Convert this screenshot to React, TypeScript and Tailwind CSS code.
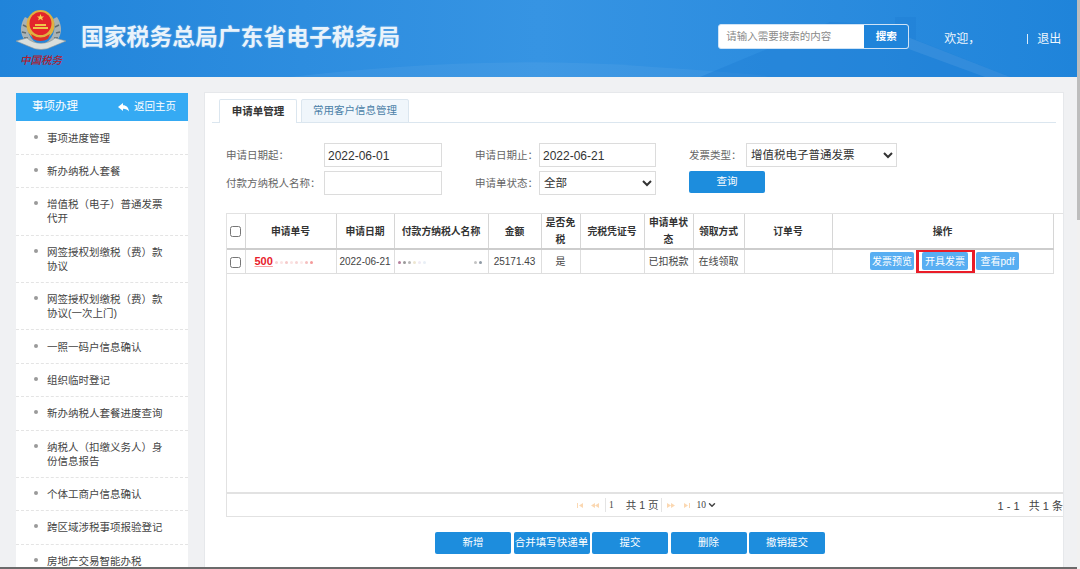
import { ChevronDown } from "lucide-react";

const menuItems = [
  "事项进度管理",
  "新办纳税人套餐",
  "增值税（电子）普通发票代开",
  "网签授权划缴税（费）款协议",
  "网签授权划缴税（费）款协议(一次上门)",
  "一照一码户信息确认",
  "组织临时登记",
  "新办纳税人套餐进度查询",
  "纳税人（扣缴义务人）身份信息报告",
  "个体工商户信息确认",
  "跨区域涉税事项报验登记",
  "房地产交易智能办税",
];

const actions = ["新增", "合并填写快递单", "提交", "删除", "撤销提交"];

function Logo() {
  return (
    <div className="flex w-[50px] flex-col items-center">
      <svg width="50" height="49" viewBox="0 0 50 49">
        <path d="M9 12 C1 24 5 38 21 43 L25 40 C13 36 9 24 13 14 Z" fill="#a9b2b4" />
        <path d="M41 12 C49 24 45 38 29 43 L25 40 C37 36 41 24 37 14 Z" fill="#a9b2b4" />
        <path d="M7 20 l4 2 M6 27 l4 1 M8 33 l4 0 M43 20 l-4 2 M44 27 l-4 1 M42 33 l-4 0" stroke="#5f6b6e" strokeWidth="1.5" />
        <path d="M0 36 L11 33 C18 40 32 40 39 33 L50 36 L38 41 Q25 48 12 41 Z" fill="#d9dedc" stroke="#8d9799" strokeWidth="0.6" />
        <ellipse cx="24.5" cy="20" rx="14" ry="15" fill="#e0b040" />
        <ellipse cx="24.5" cy="18.5" rx="11" ry="11.5" fill="#e3242b" />
        <path d="M24.5 9 l1 2.4 2.6 0 -2 1.6 .8 2.5 -2.4 -1.5 -2.4 1.5 .8 -2.5 -2 -1.6 2.6 0 Z" fill="#f6d14e" />
        <path d="M17 22 h15 v2 h-15 Z M19 19 h11 v2 h-11 Z" fill="#f0c44a" />
        <path d="M15 29 Q24.5 36 34 29 L32 34 Q24.5 38 17 34 Z" fill="#d9302a" />
      </svg>
      <span className="text-[10.5px] leading-[13px] font-medium italic text-[#ad2030] whitespace-nowrap">中国税务</span>
    </div>
  );
}

function Header() {
  return (
    <header className="relative flex h-[77px] shrink-0 items-center overflow-hidden bg-gradient-to-r from-[#2084da] via-[#3694e3] to-[#1f84da]">
      <svg className="absolute inset-0" width="1077" height="77" viewBox="0 0 1077 77">
        <path d="M290 77 Q480 55 640 66 T760 77 Z" fill="#ffffff" fillOpacity="0.05" />
        <path d="M700 77 L760 52 L830 22 L870 24 L895 38 L895 17 L916 17 L916 40 L1010 77 Z" fill="#1f7fd4" fillOpacity="0.45" />
        <path d="M905 36 L1010 77 L985 77 L895 44 Z" fill="#ffffff" fillOpacity="0.08" />
      </svg>
      <div className="relative ml-[16px] mb-[5px] flex items-start">
        <Logo />
      </div>
      <h1 className="relative ml-[15px] mb-[3px] text-[22.8px] leading-[28px] font-bold text-[#e9f3fb] whitespace-nowrap [text-shadow:0_0_2px_rgba(255,255,255,0.35)]">
        国家税务总局广东省电子税务局
      </h1>
      <div className="relative ml-[318px] mb-[4px] flex h-[25px] w-[191px] overflow-hidden rounded-[3px] border border-[#cfe3f6] bg-white">
        <div className="flex flex-1 items-center pl-[7px] text-[10.5px] text-[#8a8a8a]">请输入需要搜索的内容</div>
        <div className="flex w-[44px] items-center justify-center bg-[#1f84da] text-[10.5px] font-bold text-white">搜索</div>
      </div>
      <div className="relative ml-[35px] text-[12px] text-[#eef6fd]">欢迎，</div>
      <div className="relative ml-[47px] h-[10px] w-px bg-[#dcecf9]" />
      <div className="relative ml-[9px] text-[12px] text-[#eef6fd]">退出</div>
    </header>
  );
}

function Sidebar() {
  return (
    <aside className="ml-[16px] w-[172px] shrink-0 self-start bg-white">
      <div className="mb-[0.5px] flex h-[28px] items-center justify-between bg-[#35aaf3] pl-[16px] pr-[12px] text-white">
        <span className="text-[11.5px]">事项办理</span>
        <span className="flex items-center text-[10.5px]">
          <svg width="11" height="9" viewBox="0 0 11 9" className="mr-[5px]">
            <path d="M0 4 L5 0 V2.3 C8.5 2.3 10.5 4.5 11 8.5 C9.5 6.5 8 5.7 5 5.7 V8 Z" fill="#ffffff" />
          </svg>
          返回主页
        </span>
      </div>
      {menuItems.map((item) => (
        <div key={item} className="flex items-start border-b border-dashed border-[#e4e4e4] py-[9.2px] pl-[18px] last:border-b-0">
          <span className="mt-[4px] h-[4px] w-[4px] shrink-0 rounded-full bg-[#9a9a9a]" />
          <span className="ml-[9px] w-[118px] text-[10.5px] leading-[14px] text-[#444]">{item}</span>
        </div>
      ))}
    </aside>
  );
}

function Dots({ colors }: { colors: string[] }) {
  return (
    <span className="inline-flex items-center gap-[2px] align-middle">
      {colors.map((color, i) => (
        <span key={i} className="h-[3px] w-[3px] rounded-full" style={{ backgroundColor: color }} />
      ))}
    </span>
  );
}

function SearchForm() {
  const labelClass = "pt-[1px] text-[10.5px] text-[#666] whitespace-nowrap";
  const fieldClass = "h-[24px] w-full border border-[#dcdcdc] bg-white text-[11.5px] text-[#333] outline-none";
  return (
    <div className="ml-[21px] mt-[20px] grid grid-cols-[98px_118px_33px_64px_117px_33px_57px_151px] grid-rows-[24px_24px] items-center gap-y-[4px]">
      <span className={labelClass}>申请日期起：</span>
      <input className={`${fieldClass} pl-[3px] pt-[1px] text-[12px]`} defaultValue="2022-06-01" />
      <span />
      <span className={labelClass}>申请日期止：</span>
      <input className={`${fieldClass} pl-[3px] pt-[1px] text-[12px]`} defaultValue="2022-06-21" />
      <span />
      <span className={labelClass}>发票类型：</span>
      <select className={`${fieldClass} h-[22px]`} defaultValue="增值税电子普通发票">
        <option>增值税电子普通发票</option>
      </select>

      <span className={labelClass}>付款方纳税人名称：</span>
      <input className={fieldClass} />
      <span />
      <span className={labelClass}>申请单状态：</span>
      <select className={fieldClass} defaultValue="全部">
        <option>全部</option>
      </select>
      <span />
      <button className="col-span-2 h-[22px] w-[76px] self-start rounded-[2px] bg-[#1d8ddd] text-[10.5px] text-white">查询</button>
    </div>
  );
}

function RowButton({ label, width }: { label: string; width: string }) {
  return (
    <button className={`flex h-[18px] items-center justify-center rounded-[2px] bg-[#58aef2] text-[10px] text-white whitespace-nowrap ${width}`}>
      {label}
    </button>
  );
}

function PagerArrow({ dir, edge }: { dir: "left" | "right"; edge?: boolean }) {
  const d =
    dir === "left"
      ? edge
        ? "M1 1 h1 v5 h-1 Z M3 3.5 L7 1 V6 Z"
        : "M0 3.5 L4 1 V6 Z M4 3.5 L8 1 V6 Z"
      : edge
        ? "M7 1 h1 v5 h-1 Z M6 3.5 L2 1 V6 Z"
        : "M4 3.5 L0 1 V6 Z M8 3.5 L4 1 V6 Z";
  return (
    <svg width="8" height="7" viewBox="0 0 8 7">
      <path d={d} fill="#fbd8b2" />
    </svg>
  );
}

function DataTable() {
  const th = "border-r border-b-2 border-[#d6d6d6] border-b-[#cdcdcd] px-0 text-center align-middle text-[9.8px] leading-[17px] font-bold text-[#333]";
  const td = "border-r border-b border-[#dedede] p-0 text-center align-middle text-[10px] text-[#444] whitespace-nowrap overflow-hidden";
  return (
    <div className="ml-[21px] mt-[18px] flex h-[304px] flex-col overflow-hidden border border-r-0 border-[#e2e2e2]">
      <div className="h-[280px] shrink-0 border-b-2 border-[#e2e2e2]">
        <table className="w-[826px] table-fixed border-collapse">
          <colgroup>
            <col className="w-[18px]" />
            <col className="w-[91px]" />
            <col className="w-[58px]" />
            <col className="w-[94px]" />
            <col className="w-[53px]" />
            <col className="w-[39px]" />
            <col className="w-[64px]" />
            <col className="w-[49px]" />
            <col className="w-[51px]" />
            <col className="w-[88px]" />
            <col className="w-[221px]" />
          </colgroup>
          <thead>
            <tr className="h-[34px]">
              <th className={th}>
                <input type="checkbox" className="h-[11px] w-[11px] align-middle" />
              </th>
              <th className={th}>申请单号</th>
              <th className={th}>申请日期</th>
              <th className={th}>付款方纳税人名称</th>
              <th className={th}>金额</th>
              <th className={th}>是否免税</th>
              <th className={th}>完税凭证号</th>
              <th className={th}>申请单状态</th>
              <th className={th}>领取方式</th>
              <th className={th}>订单号</th>
              <th className={th}>操作</th>
            </tr>
          </thead>
          <tbody>
            <tr className="h-[24px]">
              <td className={td}>
                <input type="checkbox" className="h-[11px] w-[11px] align-middle" />
              </td>
              <td className={`${td} pl-[9px] text-left`}>
                <span className="text-[11px] font-bold text-[#e8202a] underline decoration-[#f8a0a0]">500</span>
                <span className="ml-[2px]">
                  <Dots colors={["#f7d5d5", "#fbe3e3", "#f5c9c9", "#fbe3e3", "#f7d5d5", "#fce9e9", "#f5c0c0", "#f49a9a"]} />
                </span>
              </td>
              <td className={`${td} text-[10.5px]`}>2022-06-21</td>
              <td className={`${td} pl-[3px] text-left`}>
                <Dots colors={["#b57f9c", "#9a9a9a", "#b8b8b8", "#eee6d0", "#efeaf5", "#e8eff6"]} />
                <span className="ml-[48px]">
                  <Dots colors={["#c4c4c4", "#8f9aa5"]} />
                </span>
              </td>
              <td className={td}>25171.43</td>
              <td className={td}>是</td>
              <td className={td} />
              <td className={td}>已扣税款</td>
              <td className={td}>在线领取</td>
              <td className={td} />
              <td className={td}>
                <div className="flex items-center justify-center gap-[8px] pl-[4px]">
                  <RowButton label="发票预览" width="w-[44px]" />
                  <span className="relative">
                    <RowButton label="开具发票" width="w-[46px]" />
                    <span className="absolute -bottom-[4px] -left-[6px] -right-[7px] -top-[3px] border-[3px] border-[#ea1c28]" />
                  </span>
                  <RowButton label="查看pdf" width="w-[43px]" />
                </div>
              </td>
            </tr>
          </tbody>
        </table>
      </div>
      <div className="relative flex flex-1 items-center pl-[349px]">
        <div className="flex items-center text-[#444]">
          <PagerArrow dir="left" edge />
          <span className="ml-[7px]">
            <PagerArrow dir="left" />
          </span>
          <span className="ml-[6px] border-l border-[#e4e4e4] pl-[3px] text-[9.5px] leading-[14px] font-[family-name:'Liberation_Serif',serif]">1</span>
          <span className="ml-[12px] mr-[5px] border-r border-[#e4e4e4] pr-[3px] text-[10.5px] leading-[14px] whitespace-nowrap">共 1 页</span>
          <PagerArrow dir="right" />
          <span className="ml-[7px]">
            <PagerArrow dir="right" edge />
          </span>
          <span className="ml-[6px] flex items-center text-[9.5px] font-[family-name:'Liberation_Serif',serif]">
            10
            <ChevronDown size={10} strokeWidth={3.5} className="ml-[1px]" />
          </span>
        </div>
        <div className="absolute right-0 top-[4px] text-[11px] leading-[16px] whitespace-nowrap text-[#444]">1 - 1&nbsp;&nbsp;&nbsp;共 1 条</div>
      </div>
    </div>
  );
}

export default function App() {
  return (
    <div className="flex h-[569px] w-[1080px] overflow-hidden bg-[#f0f1f3] font-[family-name:'Liberation_Sans','Noto_Sans_CJK_SC',sans-serif]">
      <div className="flex w-[1077px] flex-col">
        <Header />
        <div className="flex min-h-0 flex-1 pt-[15px]">
          <div className="flex min-w-0 flex-1 overflow-hidden">
            <div className="pt-[1px]">
              <Sidebar />
            </div>
            <main className="ml-[16px] w-[860px] shrink-0 overflow-hidden border border-b-0 border-[#e6e8eb] bg-white">
              <div className="mx-[7px] mt-[6px] flex items-end gap-[4px] border-b border-[#dbe6ef] pl-[7px]">
                <div className="-mb-px flex h-[24px] w-[78px] items-center justify-center rounded-t-[2px] border border-b-0 border-[#dbe6ef] bg-white text-[10.5px] font-bold text-[#333]">申请单管理</div>
                <div className="-mb-px flex h-[24px] w-[108px] items-center justify-center rounded-t-[2px] border border-[#dbe6ef] bg-[#f0f6fb] text-[10.5px] text-[#4b7fa8]">常用客户信息管理</div>
              </div>
              <SearchForm />
              <DataTable />
              <div className="ml-[230px] mt-[15px] flex gap-[2.5px]">
                {actions.map((label) => (
                  <button key={label} className="h-[22px] w-[76px] rounded-[2px] bg-[#1d8ddd] text-[10.5px] whitespace-nowrap text-white">
                    {label}
                  </button>
                ))}
              </div>
            </main>
          </div>
        </div>
        <div className="h-[2px] shrink-0 bg-[#6b6b6b]" />
      </div>
      <div className="w-[3px] shrink-0 bg-[#f1f1f1]">
        <div className="h-[220px] bg-[#bdbdbd]" />
      </div>
    </div>
  );
}
